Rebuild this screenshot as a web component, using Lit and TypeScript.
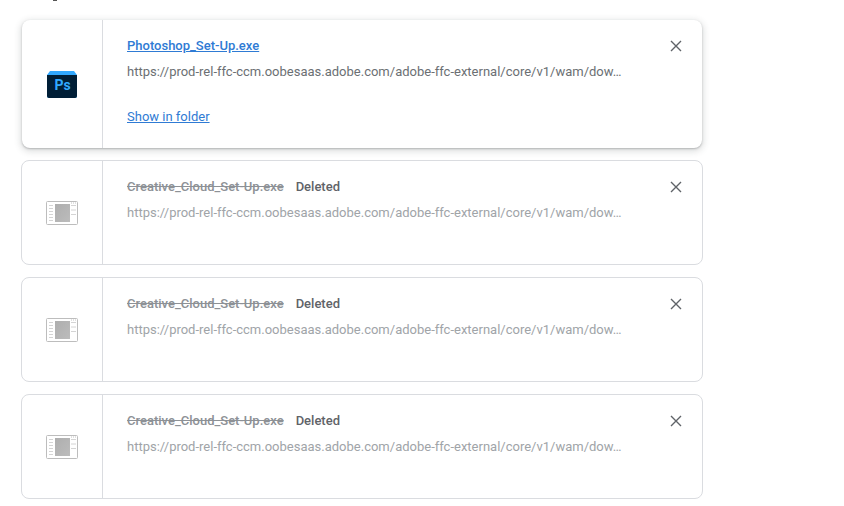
import { LitElement, html, css } from 'lit';
import { customElement, property } from 'lit/decorators.js';

const URL_TEXT = 'https://prod-rel-ffc-ccm.oobesaas.adobe.com/adobe-ffc-external/core/v1/wam/dow…';

@customElement('download-card')
export class DownloadCard extends LitElement {
  static styles = css`
    :host {
      display: block;
    }
    .card {
      display: flex;
      box-sizing: border-box;
      width: 682px;
      height: 105px;
      background: #fff;
      border: 1px solid #dadce0;
      border-radius: 8px;
      font-family: Roboto, 'Liberation Sans', sans-serif;
      font-size: 13px;
      color: #5f6368;
    }
    .card.active {
      width: 680px;
      height: 128px;
      margin-left: 1px;
      border: none;
      box-shadow: 0 1px 2px rgba(60, 64, 67, 0.3), 0 2px 6px 2px rgba(60, 64, 67, 0.15);
    }
    .icon-col {
      flex: none;
      width: 80px;
      display: flex;
      align-items: center;
      justify-content: center;
      border-right: 1px solid #dadce0;
    }
    .details {
      flex: 1;
      min-width: 0;
      padding: 18px 0 0 24px;
    }
    .title-row {
      display: flex;
      gap: 12px;
      height: 16px;
      line-height: 16px;
      font-weight: 500;
    }
    .name {
      color: #8d9196;
      text-decoration: line-through;
    }
    .link {
      color: #2f7bd4;
      text-decoration: underline;
    }
    .url {
      margin-top: 10px;
      line-height: 16px;
      white-space: nowrap;
      color: #a0a4a8;
    }
    .active .url {
      color: #6b6f73;
    }
    .action {
      display: block;
      margin-top: 29px;
      line-height: 16px;
      font-weight: 400;
    }
    .close {
      flex: none;
      width: 16px;
      height: 16px;
      margin: 18px 18px 0 0;
      color: #5f6368;
    }
    .close svg {
      display: block;
    }
  `;

  @property() name = '';
  @property({ type: Boolean }) active = false;

  render() {
    return html`
      <div class="card ${this.active ? 'active' : ''}">
        <div class="icon-col"><slot></slot></div>
        <div class="details">
          <div class="title-row">
            ${this.active
              ? html`<span class="link">${this.name}</span>`
              : html`<span class="name">${this.name}</span><span>Deleted</span>`}
          </div>
          <div class="url">${URL_TEXT}</div>
          ${this.active ? html`<span class="link action">Show in folder</span>` : ''}
        </div>
        <div class="close">
          <svg width="16" height="16" viewBox="0 0 16 16" fill="none" stroke="currentColor" stroke-width="1.4">
            <path d="M3 3l10 10M13 3L3 13"></path>
          </svg>
        </div>
      </div>
    `;
  }
}

@customElement('app-root')
export class AppRoot extends LitElement {
  static styles = css`
    :host {
      display: block;
      height: 506px;
      overflow: hidden;
      background: #fff;
    }
    .list {
      display: flex;
      flex-direction: column;
      gap: 12px;
      padding-left: 21px;
    }
    /* last pixel row of the heading that is scrolled out of view */
    .heading-edge {
      width: 4px;
      height: 1px;
      margin: 0 0 7px 32px;
      background: #555;
    }
    .ps-label {
      font-family: Roboto, 'Liberation Sans', sans-serif;
      font-size: 14px;
      font-weight: 700;
      fill: #31a8ff;
    }
    svg {
      display: block;
    }
  `;

  psIcon() {
    return html`
      <svg width="30" height="27" viewBox="0 0 30 27">
        <path d="M3 0h24l3 4v21a2 2 0 0 1-2 2H2a2 2 0 0 1-2-2V4z" fill="#31a8ff"></path>
        <path d="M0 4h30v21a2 2 0 0 1-2 2H2a2 2 0 0 1-2-2z" fill="#001e36"></path>
        <text class="ps-label" x="7.5" y="19">Ps</text>
      </svg>
    `;
  }

  pageIcon() {
    return html`
      <svg width="32" height="24" viewBox="0 0 32 24">
        <defs>
          <linearGradient id="page-fill" x1="0" y1="0" x2="1" y2="1">
            <stop offset="0" stop-color="#aeaeae"></stop>
            <stop offset="1" stop-color="#bcbcbc"></stop>
          </linearGradient>
        </defs>
        <rect x="0.5" y="0.5" width="31" height="23" rx="1" fill="#fff" stroke="#bdbdbd"></rect>
        <rect x="9" y="3" width="15" height="18" fill="url(#page-fill)"></rect>
        <path d="M3 4.5h4M3 7.5h4M3 10.5h4M3 13.5h4M3 16.5h4M3 19.5h4" stroke="#d4d4d4"></path>
        <path d="M25 4.5h5M25 9h5M25 13.5h5" stroke="#d4d4d4"></path>
        <path d="M25 2h1M27 2h1M29 2h1" stroke="#c4c4c4"></path>
      </svg>
    `;
  }

  render() {
    return html`
      <div class="list">
        <div class="heading-edge"></div>
        <download-card active name="Photoshop_Set-Up.exe">${this.psIcon()}</download-card>
        <download-card name="Creative_Cloud_Set-Up.exe">${this.pageIcon()}</download-card>
        <download-card name="Creative_Cloud_Set-Up.exe">${this.pageIcon()}</download-card>
        <download-card name="Creative_Cloud_Set-Up.exe">${this.pageIcon()}</download-card>
      </div>
    `;
  }
}
